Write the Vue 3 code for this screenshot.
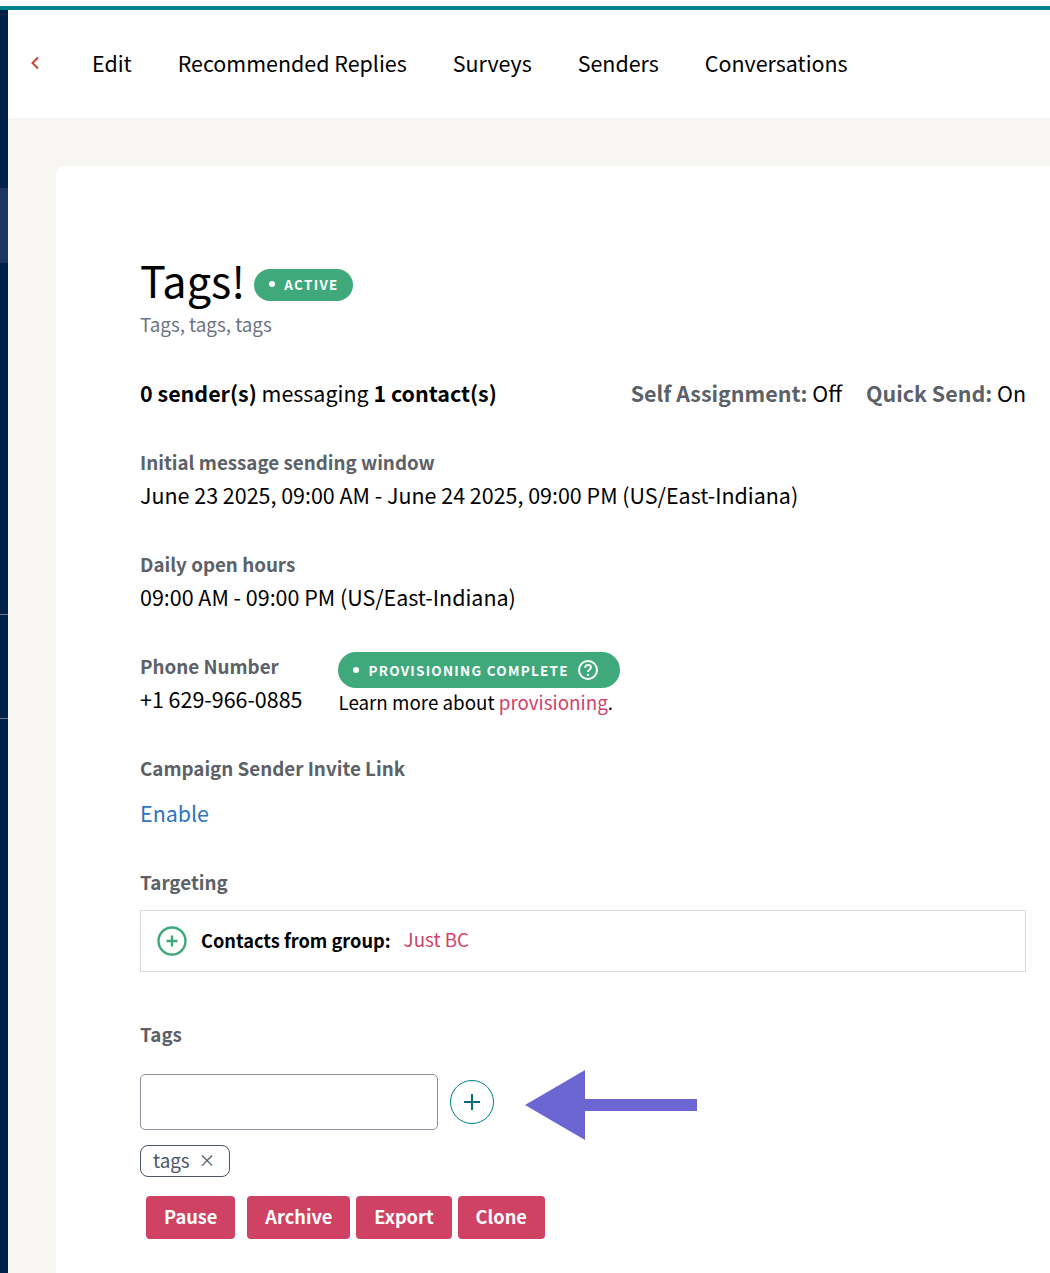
<script setup>
const navItems = ['Edit', 'Recommended Replies', 'Surveys', 'Senders', 'Conversations']
const actions = ['Pause', 'Archive', 'Export', 'Clone']
</script>

<template>
  <div class="page">
    <div class="stripe"></div>
    <div class="shell">
      <aside class="side">
        <div class="side-active"></div>
        <div class="side-rule first"></div>
        <div class="side-rule second"></div>
      </aside>
      <main class="main">
        <nav class="nav">
          <svg class="back" width="10" height="14" viewBox="0 0 10 14"><path d="M8 1.5 2.5 7 8 12.5" fill="none" stroke="#c8452f" stroke-width="2"/></svg>
          <a v-for="item in navItems" :key="item" class="nav-link">{{ item }}</a>
        </nav>
        <section class="content">
          <div class="card">
            <div class="title-row">
              <h1 class="title">Tags!</h1>
              <span class="pill active"><i class="dot"></i>ACTIVE</span>
            </div>
            <p class="subtitle">Tags, tags, tags</p>

            <div class="summary">
              <div><b>0 sender(s)</b> messaging <b>1 contact(s)</b></div>
              <div class="flags">
                <span><b class="muted">Self Assignment:</b> Off</span>
                <span><b class="muted">Quick Send:</b> On</span>
              </div>
            </div>

            <div class="label window-label">Initial message sending window</div>
            <div class="value">June 23 2025, 09:00 AM - June 24 2025, 09:00 PM (US/East-Indiana)</div>

            <div class="label hours-label">Daily open hours</div>
            <div class="value">09:00 AM - 09:00 PM (US/East-Indiana)</div>

            <div class="phone">
              <div>
                <div class="label">Phone Number</div>
                <div class="value">+1 629-966-0885</div>
              </div>
              <div class="prov">
                <span class="pill complete">
                  <i class="dot"></i>PROVISIONING COMPLETE
                  <svg class="help" width="20" height="20" viewBox="0 0 20 20">
                    <circle cx="10" cy="10" r="9" fill="none" stroke="#fff" stroke-width="2"/>
                    <path d="M7.2 7.8c0-1.7 1.2-2.7 2.9-2.7s2.8 1 2.8 2.4c0 2.3-2.9 2.2-2.9 4.4" fill="none" stroke="#fff" stroke-width="2"/>
                    <circle cx="10" cy="14.9" r="1.2" fill="#fff"/>
                  </svg>
                </span>
                <div class="learn">Learn more about <a class="pink">provisioning</a>.</div>
              </div>
            </div>

            <div class="label invite-label">Campaign Sender Invite Link</div>
            <a class="enable">Enable</a>

            <div class="label targeting-label">Targeting</div>
            <div class="target-box">
              <svg width="30" height="30" viewBox="0 0 30 30">
                <circle cx="15" cy="15" r="13.5" fill="none" stroke="#3fa97c" stroke-width="2.4"/>
                <path d="M15 9.5v11M9.5 15h11" fill="none" stroke="#3fa97c" stroke-width="2.4"/>
              </svg>
              <b class="target-name">Contacts from group:</b>
              <span class="pink target-value">Just BC</span>
            </div>

            <div class="label tags-label">Tags</div>
            <div class="tag-entry">
              <input class="tag-input" type="text" />
              <button class="add" type="button">
                <svg width="20" height="20" viewBox="0 0 20 20"><path d="M10 2v16M2 10h16" fill="none" stroke="#006f77" stroke-width="2"/></svg>
              </button>
              <svg class="arrow" width="172" height="70" viewBox="0 0 172 70">
                <path d="M0 35 60 0V29H172V41H60V70Z" fill="#6c66d3"/>
              </svg>
            </div>
            <div class="chip"><span class="chip-text">tags</span><span class="chip-x">×</span></div>
            <div class="actions">
              <button v-for="a in actions" :key="a" class="action" type="button">{{ a }}</button>
            </div>
          </div>
        </section>
      </main>
    </div>
  </div>
</template>

<style>
html, body { margin: 0; background: #fff; overflow: hidden; }
</style>

<style scoped>
.page {
  width: 1050px;
  height: 1273px;
  overflow: hidden;
  font-family: "Noto Sans CJK SC", "Noto Sans", sans-serif;
  color: #000;
  background: #fff;
  padding-top: 6px;
  box-sizing: border-box;
}
.stripe { height: 4px; background: #00818c; }
.shell { display: flex; height: 1263px; }
.side {
  width: 8px;
  flex: none;
  background: #00214a;
  position: relative;
}
.side-active { position: absolute; top: 178px; left: 0; right: 0; height: 75px; background: #1c3660; }
.side-rule { position: absolute; left: 0; right: 0; height: 1px; background: #6b7a90; }
.side-rule.first { top: 604px; }
.side-rule.second { top: 708px; }
.main { flex: 1; min-width: 0; background: #f7f6f3; }
.nav {
  height: 108px;
  background: #fff;
  display: flex;
  align-items: center;
  gap: 46px;
  padding-left: 22px;
  box-sizing: border-box;
  font-size: 21.45px;
}
.back { margin-right: 6px; margin-top: -2px; }
.nav-link { line-height: 30px; margin-top: -2px; }
.content { padding: 48px 0 0 48px; }
.card {
  background: #fff;
  border-radius: 8px 0 0 0;
  padding: 92px 24px 200px 84px;
  height: 1200px;
  box-sizing: border-box;
}
.title-row { display: flex; align-items: center; gap: 9px; }
.title { margin: 0 0 4px; font-size: 43.2px; line-height: 42px; font-weight: 400; }
.pill {
  display: inline-flex;
  align-items: center;
  background: #3fa97c;
  color: #fff;
  font-weight: 700;
  letter-spacing: 1.35px;
  border-radius: 20px;
  box-sizing: border-box;
}
.dot { width: 6px; height: 6px; border-radius: 50%; background: #fff; flex: none; }
.active { height: 32px; font-size: 13.4px; padding: 0 14px 2px 15px; gap: 9px; margin-top: 8px; }
.complete { height: 36px; font-size: 13.5px; padding: 0 22px 0 15px; gap: 9px; letter-spacing: 1.25px; white-space: nowrap; }
.help { flex: none; }
.subtitle { margin: 5px 0 0; font-size: 18.8px; line-height: 30px; color: #6b7280; }
.summary {
  display: flex;
  justify-content: space-between;
  margin-top: 38px;
  font-size: 21.45px;
  line-height: 32px;
}
.flags { display: flex; gap: 24px; }
.muted, .label { color: #5c6168; font-weight: 700; }
.label { font-size: 18.78px; line-height: 28px; }
.value { font-size: 21.45px; line-height: 32px; margin-top: 3px; }
.window-label { margin-top: 39px; }
.hours-label { margin-top: 39px; }
.phone { display: flex; gap: 36px; margin-top: 39px; }
.learn { font-size: 18.8px; line-height: 30px; margin-top: -1px; }
.pink { color: #d1416a; }
.invite-label { margin-top: 37px; }
.enable { display: block; color: #2f74c0; font-size: 21.45px; line-height: 32px; margin-top: 15px; }
.targeting-label { margin-top: 39px; }
.target-box {
  display: flex;
  align-items: center;
  height: 62px;
  margin-top: 14px;
  border: 1px solid #d9d9d9;
  box-sizing: border-box;
  padding-left: 15.5px;
  font-size: 18.8px;
}
.target-name { margin: 0 0 3px 14.5px; font-size: 18.2px; line-height: 26px; }
.target-value { margin: 0 0 4px 13px; line-height: 26px; }
.tags-label { margin-top: 48px; }
.tag-entry { display: flex; align-items: center; margin-top: 26px; position: relative; height: 56px; }
.tag-input {
  width: 298px;
  height: 56px;
  box-sizing: border-box;
  border: 1px solid #8b929c;
  border-radius: 5px;
  background: #fff;
}
.add {
  width: 44px;
  height: 44px;
  margin-left: 12px;
  padding: 0;
  border: 1px solid #00818c;
  border-radius: 50%;
  background: #fff;
  display: flex;
  align-items: center;
  justify-content: center;
}
.arrow { position: absolute; left: 385px; top: -4px; }
.chip {
  display: flex;
  align-items: center;
  height: 32px;
  width: 90px;
  box-sizing: border-box;
  margin-top: 15px;
  padding: 0 0 3px 12px;
  border: 1px solid #4b5563;
  border-radius: 8px;
  font-size: 18.8px;
  line-height: 24px;
  color: #4b5563;
}
.chip-x { margin: 1px 0 0 9px; font-size: 17px; line-height: 20px; }
.actions { display: flex; gap: 6px; margin: 19px 0 0 6px; }
.action {
  height: 43px;
  padding: 0 18px 3px;
  border: 0;
  border-radius: 4px;
  background: #d04264;
  color: #fff;
  font: 700 18.2px/26px "Noto Sans CJK SC", "Noto Sans", sans-serif;
}
.action:first-child { margin-right: 6px; }
</style>
